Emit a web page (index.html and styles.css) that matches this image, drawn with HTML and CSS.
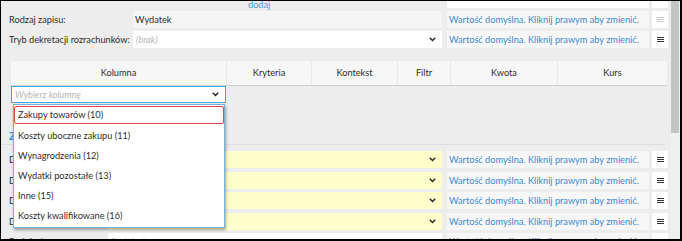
FILE: index.html
```html
<!DOCTYPE html>
<html lang="pl">

<head>
	<meta charset="UTF-8">
	<meta name="viewport" content="width=device-width, initial-scale=1.0">
	<title>Wydatek | Ustawienia zapisu</title>
	<link rel="stylesheet" href="styles.css">
</head>

<body>
	<div class="window">
		<div class="viewport">
			<div class="scroller">

				<!-- row scrolled out of view -->
				<div class="row row-partial">
					<div class="label"></div>
					<div class="field field-link"><a class="link">dodaj</a></div>
					<div class="hint hint-white"></div>
					<div class="menu"></div>
				</div>

				<div class="row">
					<div class="label">Rodzaj zapisu:</div>
					<div class="field field-readonly">Wydatek</div>
					<div class="hint">Wartość domyślna. Kliknij prawym aby zmienić.</div>
					<div class="menu menu-disabled">
						<svg width="7" height="5" viewBox="0 0 7 5"><rect y="0" width="7" height="1" /><rect y="2" width="7" height="1" /><rect y="4" width="7" height="1" /></svg>
					</div>
				</div>

				<div class="row">
					<div class="label">Tryb dekretacji rozrachunków:</div>
					<div class="field field-select">
						<span class="placeholder">(brak)</span>
						<svg class="chevron" width="7" height="5" viewBox="0 0 7 5"><path d="M0.8 0.8 L3.5 3.6 L6.2 0.8" /></svg>
					</div>
					<div class="hint">Wartość domyślna. Kliknij prawym aby zmienić.</div>
					<div class="menu">
						<svg width="7" height="5" viewBox="0 0 7 5"><rect y="0" width="7" height="1" /><rect y="2" width="7" height="1" /><rect y="4" width="7" height="1" /></svg>
					</div>
				</div>

				<div class="columns">
					<div class="columns-head">
						<div class="col col-name">Kolumna</div>
						<div class="col col-crit">Kryteria</div>
						<div class="col col-ctx">Kontekst</div>
						<div class="col col-filter">Filtr</div>
						<div class="col col-amount">Kwota</div>
						<div class="col col-rate">Kurs</div>
					</div>
					<div class="column-picker">
						<span class="placeholder">Wybierz kolumnę</span>
						<svg class="chevron" width="7" height="5" viewBox="0 0 7 5"><path d="M0.8 0.8 L3.5 3.6 L6.2 0.8" /></svg>
					</div>
				</div>

				<div class="section-title">Zaawansowane</div>

				<div class="rows-lower">
					<div class="row row-wide">
						<div class="label">Dział:</div>
						<div class="field field-select field-required">
							<svg class="chevron" width="7" height="5" viewBox="0 0 7 5"><path d="M0.8 0.8 L3.5 3.6 L6.2 0.8" /></svg>
						</div>
						<div class="hint">Wartość domyślna. Kliknij prawym aby zmienić.</div>
						<div class="menu">
							<svg width="7" height="5" viewBox="0 0 7 5"><rect y="0" width="7" height="1" /><rect y="2" width="7" height="1" /><rect y="4" width="7" height="1" /></svg>
						</div>
					</div>
					<div class="row row-wide">
						<div class="label">Dokument:</div>
						<div class="field field-select field-required">
							<svg class="chevron" width="7" height="5" viewBox="0 0 7 5"><path d="M0.8 0.8 L3.5 3.6 L6.2 0.8" /></svg>
						</div>
						<div class="hint">Wartość domyślna. Kliknij prawym aby zmienić.</div>
						<div class="menu">
							<svg width="7" height="5" viewBox="0 0 7 5"><rect y="0" width="7" height="1" /><rect y="2" width="7" height="1" /><rect y="4" width="7" height="1" /></svg>
						</div>
					</div>
					<div class="row row-wide">
						<div class="label">Data operacji:</div>
						<div class="field field-select field-required">
							<svg class="chevron" width="7" height="5" viewBox="0 0 7 5"><path d="M0.8 0.8 L3.5 3.6 L6.2 0.8" /></svg>
						</div>
						<div class="hint">Wartość domyślna. Kliknij prawym aby zmienić.</div>
						<div class="menu">
							<svg width="7" height="5" viewBox="0 0 7 5"><rect y="0" width="7" height="1" /><rect y="2" width="7" height="1" /><rect y="4" width="7" height="1" /></svg>
						</div>
					</div>
					<div class="row row-wide">
						<div class="label">Dostawca:</div>
						<div class="field field-select field-required">
							<svg class="chevron" width="7" height="5" viewBox="0 0 7 5"><path d="M0.8 0.8 L3.5 3.6 L6.2 0.8" /></svg>
						</div>
						<div class="hint">Wartość domyślna. Kliknij prawym aby zmienić.</div>
						<div class="menu">
							<svg width="7" height="5" viewBox="0 0 7 5"><rect y="0" width="7" height="1" /><rect y="2" width="7" height="1" /><rect y="4" width="7" height="1" /></svg>
						</div>
					</div>
					<div class="row row-wide">
						<div class="label">Podpisał:</div>
						<div class="field field-select">
							<span class="placeholder placeholder-upright">Podpisał</span>
							<svg class="chevron" width="7" height="5" viewBox="0 0 7 5"><path d="M0.8 0.8 L3.5 3.6 L6.2 0.8" /></svg>
						</div>
						<div class="hint">Wartość domyślna. Kliknij prawym aby zmienić.</div>
						<div class="menu">
							<svg width="7" height="5" viewBox="0 0 7 5"><rect y="0" width="7" height="1" /><rect y="2" width="7" height="1" /><rect y="4" width="7" height="1" /></svg>
						</div>
					</div>
				</div>

				<!-- open list of the column picker -->
				<ul class="dropdown">
					<li class="dropdown-item dropdown-item-active">Zakupy towarów (10)</li>
					<li class="dropdown-item">Koszty uboczne zakupu (11)</li>
					<li class="dropdown-item">Wynagrodzenia (12)</li>
					<li class="dropdown-item">Wydatki pozostałe (13)</li>
					<li class="dropdown-item">Inne (15)</li>
					<li class="dropdown-item">Koszty kwalifikowane (16)</li>
				</ul>
			</div>
		</div>
		<div class="scrollbar">
			<div class="scrollbar-thumb"></div>
		</div>
	</div>
</body>

</html>
```

FILE: styles.css
```css
body {
	margin: 0;
	background: #ffffff;
	font-family: "Segoe UI", Lato, "Noto Sans", sans-serif;
	font-size: 9.2px;
	color: #2e2e2e;
}

.window {
	width: 682px;
	height: 241px;
	box-sizing: border-box;
	border-style: solid;
	border-color: #000000;
	border-width: 1px 2px 2px 1px;
	display: flex;
	overflow: hidden;
	background: #ededed;
}

.viewport {
	flex: 1;
	position: relative;
	overflow: hidden;
}

/* content is scrolled down by 10px */
.scroller {
	position: relative;
	margin-top: -10px;
	padding-right: 3px;
}

.scrollbar {
	width: 9px;
	background: #f0f0f0;
}

.scrollbar-thumb {
	width: 8px;
	height: 132px;
	background: #c4c4c4;
}

/* form rows */
.row {
	display: flex;
	height: 17px;
	margin-bottom: 3px;
	--label: 132px;
}

.row-wide {
	--label: 107px;
	margin-bottom: 3.5px;
}

.label {
	flex: 0 0 var(--label);
	box-sizing: border-box;
	padding-left: 8px;
	line-height: 17px;
	white-space: nowrap;
	overflow: hidden;
}

.field {
	flex: 1;
	display: flex;
	align-items: center;
	padding: 0 6px 0 2px;
	position: relative;
}

.field-readonly {
	background: #f5f5f5;
}

.field-select {
	background: #ffffff;
	padding-left: 3px;
}

.field-required {
	background: #ffffcc;
}

.field-link {
	align-items: flex-start;
	padding-left: 115px;
	padding-top: 7px;
	box-sizing: border-box;
}

.link {
	color: #4a9be0;
	line-height: 13px;
}

.placeholder {
	color: #b5b5b5;
	font-style: italic;
}

.placeholder-upright {
	font-style: normal;
	color: #c8c8c8;
}

.chevron {
	margin-left: auto;
	fill: none;
	stroke: #222222;
	stroke-width: 1.4;
}

.hint {
	flex: 0 0 202px;
	margin-left: 5px;
	box-sizing: border-box;
	padding-left: 2px;
	background: #f7f7f7;
	color: #3b8ad4;
	line-height: 17px;
	white-space: nowrap;
	overflow: hidden;
}

.hint-white {
	background: #ffffff;
}

.menu {
	flex: 0 0 16px;
	margin-left: 3px;
	background: #ffffff;
	display: flex;
	align-items: center;
	justify-content: center;
	fill: #333333;
}

.menu-disabled {
	fill: #c9c9c9;
}

/* column table */
.columns {
	margin: 13px 0 0 10px;
	width: 656px;
}

.columns-head {
	display: grid;
	grid-template-columns: 215px 85px 86px 53px 107px 1fr;
	height: 24px;
	background: #f7f7f7;
	border-bottom: 1px solid #cdcdcd;
}

.col {
	text-align: center;
	line-height: 24px;
	border-left: 1px solid #e9e9e9;
}

.col-name {
	border-left: none;
}

.column-picker {
	width: 215px;
	height: 17px;
	box-sizing: border-box;
	border: 1px solid #3fa7e2;
	background: #ffffff;
	display: flex;
	align-items: center;
	padding: 0 6px 0 3px;
}

.section-title {
	margin: 24px 3px 6px 0;
	padding-left: 8px;
	color: #3b8ad4;
	font-weight: bold;
	font-size: 11px;
	line-height: 17px;
	border-bottom: 1px solid #dedede;
}

/* open dropdown */
.dropdown {
	position: absolute;
	left: 12px;
	top: 113px;
	width: 210px;
	margin: 0;
	padding: 1px 0 1px 0;
	list-style: none;
	background: #ffffff;
	border: 1px solid #6fb4dc;
	box-shadow: 1px 2px 3px rgba(0, 0, 0, 0.35);
}

.dropdown-item {
	height: 20px;
	line-height: 20px;
	padding-left: 4px;
	white-space: nowrap;
}

.dropdown-item-active {
	height: 16px;
	line-height: 16px;
	margin-bottom: 2px;
	padding-left: 3px;
	border: 1px solid #e0464c;
	border-radius: 2px;
}
```
